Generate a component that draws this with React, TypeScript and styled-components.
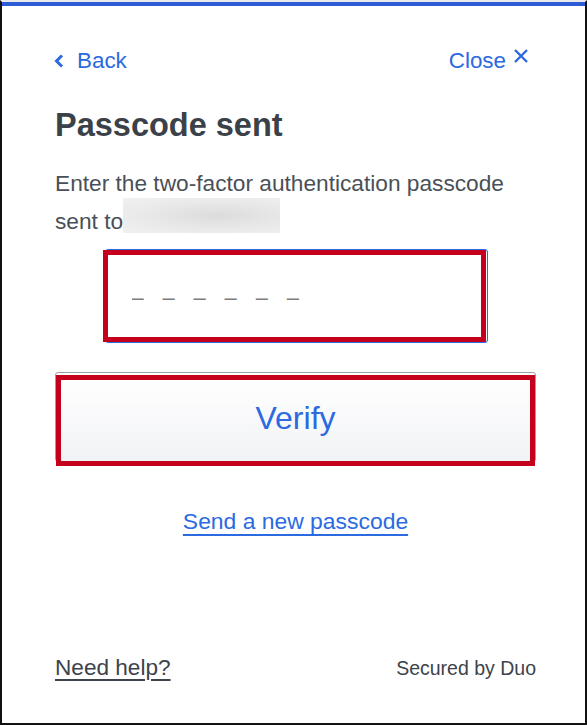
import React from "react";
import styled, { createGlobalStyle } from "styled-components";

const Global = createGlobalStyle`
  html, body { margin: 0; padding: 0; background: #ffffff; }
  body { font-family: "Liberation Sans", Arial, sans-serif; }
  * { box-sizing: border-box; }
`;

const Frame = styled.div`
  width: 587px;
  height: 725px;
  border-left: 2px solid #111;
  border-right: 2px solid #111;
  border-bottom: 2px solid #111;
  border-top: 2px solid #e9e9e9;
  display: flex;
  flex-direction: column;
  background: #fff;
`;

const TopBar = styled.div`
  height: 4px;
  background: #2c5bd6;
  flex-shrink: 0;
`;

const Content = styled.div`
  flex: 1;
  display: flex;
  flex-direction: column;
  padding: 40px 49px 40px 53px;
`;

const Header = styled.div`
  display: flex;
  justify-content: space-between;
  align-items: center;
  height: 30px;
`;

const NavLink = styled.a<{ $right?: boolean }>`
  display: flex;
  align-items: center;
  gap: ${(p) => (p.$right ? 7 : 13)}px;
  margin-right: ${(p) => (p.$right ? 7 : 0)}px;
  font-size: 22.4px;
  line-height: 30px;
  color: #2b6ae0;
  text-decoration: none;
  cursor: pointer;
`;

const Title = styled.h1`
  margin: 31px 0 0;
  font-size: 32.5px;
  line-height: 36px;
  font-weight: 700;
  color: #3a4148;
`;

const Body = styled.p`
  margin: 21px 0 0;
  font-size: 22.7px;
  line-height: 38px;
  color: #4a5057;
`;

const Redacted = styled.span`
  display: inline-block;
  position: relative;
  top: -4px;
  width: 157px;
  height: 35px;
  vertical-align: top;
  background: radial-gradient(ellipse at 60% 50%, #dcdcdc 0%, #e9e9e9 55%, #f1f1f1 100%);
`;

const InputWrap = styled.div`
  position: relative;
  align-self: center;
  width: 383px;
  height: 94px;
  margin-top: 9px;
  margin-left: 1px;
`;

const CodeInput = styled.input`
  width: 100%;
  height: 100%;
  border: 1px solid #2b6ae0;
  border-radius: 3px;
  padding: 4px 0 0 26px;
  font-family: "Liberation Sans", Arial, sans-serif;
  font-size: 22px;
  letter-spacing: 18.8px;
  color: #333;
  outline: none;
  background: #fff;
  &::placeholder { color: #7d7d7d; }
`;

const Highlight = styled.div<{ $l: number; $t: number; $w: number; $h: number }>`
  position: absolute;
  left: ${(p) => p.$l}px;
  top: ${(p) => p.$t}px;
  width: ${(p) => p.$w}px;
  height: ${(p) => p.$h}px;
  border: 5px solid #c4001d;
  pointer-events: none;
`;

const ButtonWrap = styled.div`
  position: relative;
  margin-top: 29px;
  height: 90px;
`;

const VerifyButton = styled.button`
  width: 100%;
  height: 100%;
  border: 1px solid #9b9fa6;
  border-radius: 3px;
  background: linear-gradient(#ffffff, #f2f3f6);
  font-family: "Liberation Sans", Arial, sans-serif;
  font-size: 32px;
  color: #2b6ae0;
  padding: 3px 0 0;
  cursor: pointer;
`;

const SendRow = styled.div`
  display: flex;
  justify-content: center;
  margin-top: 44px;
`;

const SendLink = styled.a`
  font-size: 22.9px;
  line-height: 30px;
  color: #2b6ae0;
  text-decoration: underline;
  text-decoration-thickness: 2px;
  text-underline-offset: 5px;
`;

const Footer = styled.div`
  margin-top: auto;
  display: flex;
  justify-content: space-between;
  align-items: baseline;
`;

const HelpLink = styled.a`
  font-size: 22.6px;
  line-height: 30px;
  color: #3d434a;
  text-decoration: underline;
  text-decoration-thickness: 2px;
  text-underline-offset: 4px;
`;

const Secured = styled.span`
  font-size: 19.5px;
  color: #3d434a;
`;

export default function App() {
  return (
    <>
      <Global />
      <Frame>
        <TopBar />
        <Content>
          <Header>
            <NavLink>
              <svg width="10" height="16" viewBox="0 0 10 16" style={{ marginLeft: -1 }}>
                <path d="M8 2.5 L2.5 8 L8 13.5" fill="none" stroke="#2b6ae0" strokeWidth="3" />
              </svg>
              Back
            </NavLink>
            <NavLink $right>
              Close
              <svg width="16" height="16" viewBox="0 0 16 16" style={{ marginTop: -10 }}>
                <path d="M2 2 L14 14 M14 2 L2 14" fill="none" stroke="#2b6ae0" strokeWidth="2.4" />
              </svg>
            </NavLink>
          </Header>
          <Title>Passcode sent</Title>
          <Body>
            Enter the two-factor authentication passcode sent to<Redacted />
          </Body>
          <InputWrap>
            <CodeInput placeholder="––––––" />
            <Highlight $l={-2} $t={1} $w={383} $h={92} />
          </InputWrap>
          <ButtonWrap>
            <VerifyButton>Verify</VerifyButton>
            <Highlight $l={1} $t={3} $w={479} $h={91} />
          </ButtonWrap>
          <SendRow>
            <SendLink>Send a new passcode</SendLink>
          </SendRow>
          <Footer>
            <HelpLink>Need help?</HelpLink>
            <Secured>Secured by Duo</Secured>
          </Footer>
        </Content>
      </Frame>
    </>
  );
}
